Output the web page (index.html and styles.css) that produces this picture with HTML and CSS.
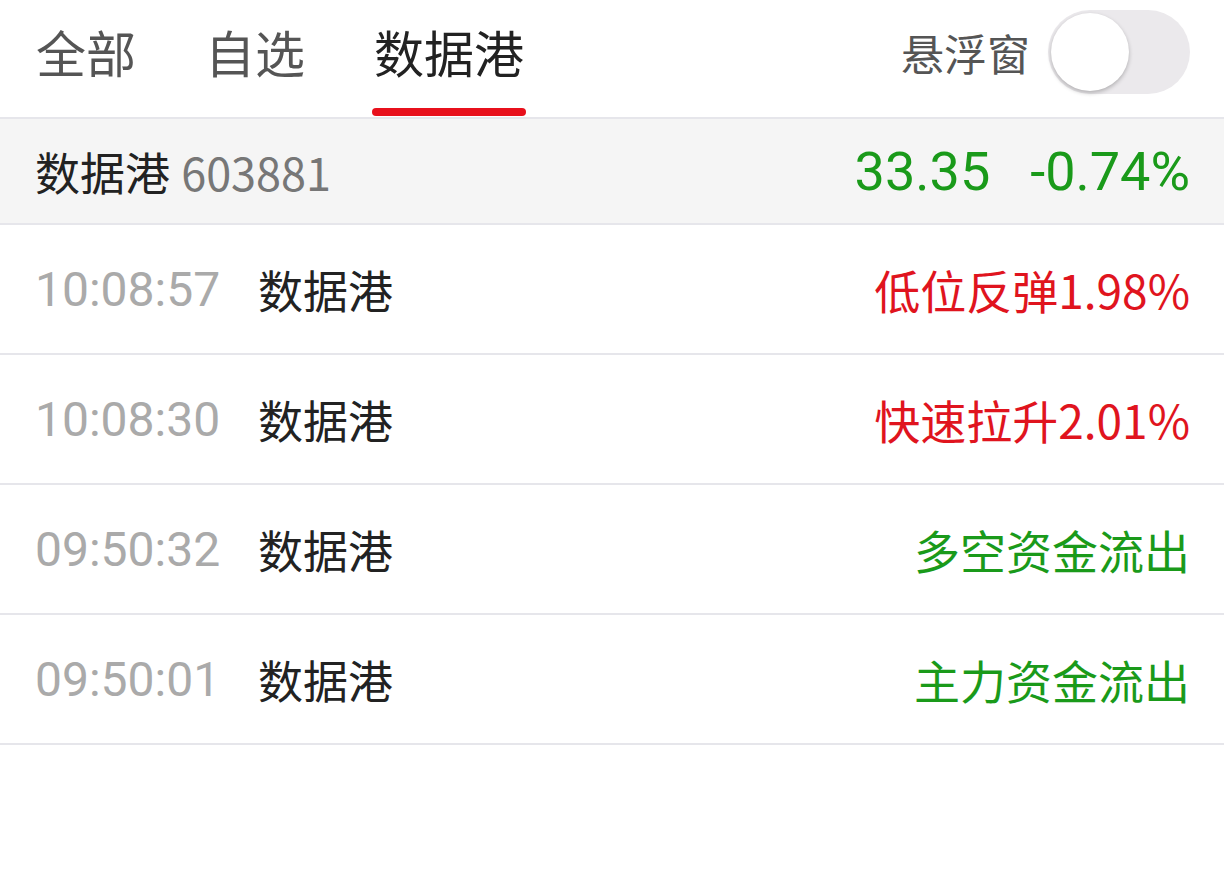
FILE: index.html
```html
<!DOCTYPE html>
<html lang="zh-CN">
<head>
    <meta charset="UTF-8">
    <meta name="viewport" content="width=device-width, initial-scale=1.0">
    <title>数据港</title>
    <link rel="stylesheet" href="styles.css">
</head>
<body>
    <div class="tab-bar">
        <div class="tabs">
            <span class="tab">全部</span>
            <span class="tab">自选</span>
            <span class="tab active">数据港</span>
        </div>
        <div class="float-switch">
            <span class="float-label">悬浮窗</span>
            <span class="toggle"><span class="knob"></span></span>
        </div>
    </div>

    <div class="stock-head">
        <div class="stock-name">数据港 <span class="stock-code">603881</span></div>
        <div class="stock-price">
            <span>33.35</span>
            <span>-0.74%</span>
        </div>
    </div>

    <div class="alert-list">
        <div class="alert-row">
            <span class="alert-time">10:08:57</span>
            <span class="alert-name">数据港</span>
            <span class="alert-msg up">低位反弹1.98%</span>
        </div>
        <div class="alert-row">
            <span class="alert-time">10:08:30</span>
            <span class="alert-name">数据港</span>
            <span class="alert-msg up">快速拉升2.01%</span>
        </div>
        <div class="alert-row">
            <span class="alert-time">09:50:32</span>
            <span class="alert-name">数据港</span>
            <span class="alert-msg down">多空资金流出</span>
        </div>
        <div class="alert-row">
            <span class="alert-time">09:50:01</span>
            <span class="alert-name">数据港</span>
            <span class="alert-msg down">主力资金流出</span>
        </div>
    </div>
</body>
</html>
```

FILE: styles.css
```css
body {
    margin: 0;
    font-family: Roboto, "Noto Sans CJK SC", sans-serif;
    background-color: #fff;
    color: #222;
}
.tab-bar {
    display: flex;
    justify-content: space-between;
    align-items: center;
    height: 117px;
    padding: 0 34px 0 36px;
    border-bottom: 2px solid #e6e6eb;
}
.tabs {
    display: flex;
    gap: 69px;
    height: 100%;
}
.tab {
    position: relative;
    display: flex;
    align-items: center;
    font-size: 50px;
    color: #555;
    padding-bottom: 16px;
}
.tab.active {
    color: #222;
}
.tab.active::after {
    content: "";
    position: absolute;
    left: -2px;
    right: -2px;
    bottom: 1px;
    height: 8px;
    border-radius: 4px;
    background-color: #e8101c;
}
.float-switch {
    display: flex;
    align-items: center;
    gap: 18px;
    padding-bottom: 14px;
}
.float-label {
    font-size: 43px;
    color: #555;
}
.toggle {
    display: flex;
    align-items: center;
    width: 142px;
    height: 84px;
    border-radius: 42px;
    background-color: #ebe9ec;
    padding: 0 3px;
    box-sizing: border-box;
}
.knob {
    width: 78px;
    height: 78px;
    border-radius: 50%;
    background-color: #fff;
    box-shadow: 0 2px 4px rgba(0,0,0,0.25);
}
.stock-head {
    display: flex;
    justify-content: space-between;
    align-items: center;
    height: 104px;
    padding: 0 34px 0 35px;
    background-color: #f5f5f5;
    border-bottom: 2px solid #e6e6eb;
}
.stock-name {
    font-size: 45px;
    color: #222;
}
.stock-code {
    font-family: "Noto Sans CJK SC", sans-serif;
    color: #777;
}
.stock-price {
    display: flex;
    gap: 40px;
    font-size: 54px;
    color: #1a9a1a;
}
.alert-row {
    display: flex;
    align-items: center;
    height: 128px;
    padding: 0 34px 0 35px;
    border-bottom: 2px solid #e6e6eb;
}
.alert-time {
    width: 223px;
    font-size: 48px;
    color: #aaa;
}
.alert-name {
    flex: 1;
    font-size: 45px;
    color: #222;
}
.alert-msg {
    font-family: "Noto Sans CJK SC", sans-serif;
    font-size: 46px;
}
.up {
    color: #e0141e;
}
.down {
    color: #1a9a1a;
}
```
